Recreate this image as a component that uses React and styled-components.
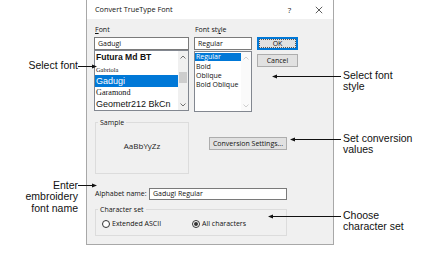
import React from 'react';
import styled, { createGlobalStyle } from 'styled-components';

const Global = createGlobalStyle`
  html, body { margin: 0; padding: 0; background: #fff; }
  #root { width: 432px; height: 262px; }
  * { box-sizing: border-box; }
`;

const Page = styled.div`
  position: relative;
  width: 432px;
  height: 262px;
  overflow: hidden;
  background: #fff;
  font-family: "Open Sans", "Noto Sans", sans-serif;
  color: #000;
`;

const Dialog = styled.div`
  margin-left: 86px;
  width: 248px;
  height: 245px;
  border: 1px solid #a8a8a8;
  border-top: none;
  background: #f0f0f0;
  display: flex;
  flex-direction: column;
`;

const TitleBar = styled.div`
  height: 19px;
  background: #fff;
  display: flex;
  align-items: center;
  padding-left: 8px;
  flex-shrink: 0;
`;

const TitleText = styled.div`
  flex: 1;
  font-size: 7.3px;
  line-height: 19px;
  color: #111;
`;

const TitleControl = styled.div`
  width: 29px;
  height: 19px;
  display: flex;
  align-items: center;
  justify-content: center;
  font-size: 8px;
  color: #222;
`;

const Body = styled.div`
  flex: 1;
  padding: 6px 0 0 7px;
  display: flex;
  flex-direction: column;
`;

const TopGrid = styled.div`
  display: grid;
  grid-template-columns: 95px 58px 41px;
  grid-template-rows: 12px 13px 61px;
  column-gap: 5px;
`;

const FieldLabel = styled.div`
  font-size: 7px;
  line-height: 9px;
  color: #111;
  padding-left: 1px;
  u { text-decoration: underline; text-underline-offset: 1px; }
`;

const TextBox = styled.div`
  height: ${p => p.$h || 13}px;
  width: ${p => (p.$w ? `${p.$w}px` : 'auto')};
  background: #fff;
  border: 1px solid #7a7a7a;
  font-size: 7px;
  line-height: ${p => (p.$h || 13) - 2}px;
  padding-left: 3px;
  color: #111;
  white-space: nowrap;
  overflow: hidden;
`;

const ListBox = styled.div`
  height: 61px;
  margin-top: ${p => p.$mt || 0}px;
  background: #fff;
  border: 1px solid #828790;
  display: flex;
  overflow: hidden;
`;

const Items = styled.div`
  flex: 1;
  min-width: 0;
  overflow: hidden;
  display: flex;
  flex-direction: column;
  padding-top: ${p => p.$pt || 0}px;
`;

const FontItem = styled.div`
  height: ${p => p.$h}px;
  line-height: ${p => p.$h}px;
  padding-left: 1px;
  font-family: ${p => p.$family};
  font-size: ${p => p.$size}px;
  font-weight: ${p => p.$weight || 400};
  white-space: nowrap;
  overflow: hidden;
  background: ${p => (p.$selected ? '#0078d7' : 'transparent')};
  color: ${p => (p.$selected ? '#fff' : '#111')};
`;

const StyleItem = styled.div`
  height: ${p => (p.$selected ? 8 : 9)}px;
  line-height: ${p => (p.$selected ? 8 : 9)}px;
  margin-bottom: ${p => (p.$selected ? 1 : 0)}px;
  font-size: 7px;
  padding-left: 1px;
  white-space: nowrap;
  background: ${p => (p.$selected ? '#0078d7' : 'transparent')};
  color: ${p => (p.$selected ? '#fff' : '#111')};
`;

const ScrollBar = styled.div`
  width: 10px;
  flex-shrink: 0;
  display: flex;
  flex-direction: column;
  align-items: center;
  background: ${p => (p.$disabled ? '#fafafa' : '#f0f0f0')};
`;

const ScrollArrow = styled.div`
  height: 11px;
  width: 10px;
  display: flex;
  align-items: center;
  justify-content: center;
`;

const ScrollTrack = styled.div`
  flex: 1;
  width: 10px;
  display: flex;
  justify-content: center;
`;

const Thumb = styled.div`
  margin-top: 10px;
  width: 8px;
  height: 11px;
  background: #cdcdcd;
`;

const ButtonColumn = styled.div`
  grid-column: 3;
  grid-row: 2 / span 2;
  display: flex;
  flex-direction: column;
  gap: 4px;
`;

const Button = styled.div`
  height: 13px;
  width: ${p => p.$w || 41}px;
  background: #e1e1e1;
  border: 1px solid ${p => (p.$default ? '#0078d7' : '#adadad')};
  box-shadow: ${p => (p.$default ? 'inset 0 0 0 1px #0078d7' : 'none')};
  display: flex;
  align-items: center;
  justify-content: center;
  font-size: 7px;
  line-height: 9px;
  color: #111;
  position: relative;
  white-space: nowrap;
`;

const FocusRect = styled.span`
  position: absolute;
  inset: 1px;
  border: 1px dotted #555;
`;

const SampleRow = styled.div`
  display: flex;
  margin-top: 7px;
  padding-left: 1px;
`;

const Group = styled.fieldset`
  margin: 0;
  padding: 0;
  min-width: 0;
  width: ${p => p.$w}px;
  height: ${p => p.$h}px;
  border: 1px solid #dcdcdc;
  display: block;
`;

const Legend = styled.legend`
  font-size: 7px;
  line-height: 9px;
  padding: 0 2px;
  margin-left: 2px;
  color: #111;
`;

const SampleText = styled.div`
  height: 37px;
  display: flex;
  align-items: center;
  justify-content: center;
  font-family: "Open Sans", sans-serif;
  font-size: 8px;
  color: #222;
`;

const SettingsButton = styled(Button)`
  margin-left: 20px;
  margin-top: 18.5px;
`;

const AlphabetRow = styled.div`
  display: flex;
  align-items: center;
  margin-top: 13.5px;
  padding-left: 1px;
`;

const AlphaLabel = styled.div`
  width: 54px;
  font-size: 7px;
  line-height: 9px;
  color: #111;
`;

const CharsetGroup = styled(Group)`
  margin-top: 5.5px;
  margin-left: 1px;
`;

const RadioRow = styled.div`
  display: grid;
  grid-template-columns: 90px auto;
  padding: 5px 0 0 6px;
`;

const RadioLabel = styled.div`
  display: flex;
  align-items: center;
  gap: 2px;
  font-size: 7px;
  line-height: 9px;
  color: #111;
`;

const RadioCircle = styled.span`
  width: 8px;
  height: 8px;
  border-radius: 50%;
  border: 1px solid #333;
  background: #fff;
  display: flex;
  align-items: center;
  justify-content: center;
  &::after {
    content: '';
    width: 4px;
    height: 4px;
    border-radius: 50%;
    background: ${p => (p.$checked ? '#333' : 'transparent')};
  }
`;

const ArrowLayer = styled.svg`
  position: absolute;
  left: 0;
  top: 0;
  width: 432px;
  height: 262px;
  pointer-events: none;
`;

const Note = styled.div`
  position: absolute;
  top: ${p => p.$top}px;
  ${p => (p.$side === 'left' ? `right: ${432 - p.$x}px; text-align: right;` : `left: ${p.$x}px; text-align: left;`)}
  font-family: "Liberation Sans", Arial, sans-serif;
  font-size: 10.5px;
  line-height: 11.5px;
  color: #111;
  white-space: nowrap;
`;

const Chevron = ({ up, color }) => (
  <svg width="6" height="4" viewBox="0 0 6 4">
    <polyline
      points={up ? '0.5,3.5 3,1 5.5,3.5' : '0.5,0.5 3,3 5.5,0.5'}
      fill="none"
      stroke={color}
      strokeWidth="0.9"
    />
  </svg>
);

const CloseIcon = () => (
  <svg width="8" height="8" viewBox="0 0 8 8">
    <path d="M0.8 0.8 L7.2 7.2 M7.2 0.8 L0.8 7.2" stroke="#333" strokeWidth="0.8" fill="none" />
  </svg>
);

const arrows = [
  { x1: 78, x2: 97, y: 66.5 },
  { x1: 78, x2: 97, y: 185.5 },
  { x1: 341, x2: 272, y: 76.5 },
  { x1: 341, x2: 290, y: 139.5 },
  { x1: 341, x2: 268, y: 216.5 },
];

const fonts = [
  { name: 'Futura Md BT', family: '"Liberation Sans", sans-serif', size: 8.6, weight: 700, h: 13 },
  { name: 'Gabriola', family: '"Liberation Serif", serif', size: 6.4, h: 12 },
  { name: 'Gadugi', family: '"Liberation Sans", sans-serif', size: 9, h: 12, selected: true },
  { name: 'Garamond', family: '"Liberation Serif", serif', size: 8.2, h: 12 },
  { name: 'Geometr212 BkCn', family: '"Liberation Sans", sans-serif', size: 9, h: 12 },
];

const styles = ['Regular', 'Bold', 'Oblique', 'Bold Oblique'];

export default function App() {
  return (
    <Page>
      <Global />
      <Dialog>
        <TitleBar>
          <TitleText>Convert TrueType Font</TitleText>
          <TitleControl>?</TitleControl>
          <TitleControl><CloseIcon /></TitleControl>
        </TitleBar>
        <Body>
          <TopGrid>
            <FieldLabel><u>F</u>ont</FieldLabel>
            <FieldLabel>Font st<u>y</u>le</FieldLabel>
            <div />
            <TextBox>Gadugi</TextBox>
            <TextBox>Regular</TextBox>
            <ButtonColumn>
              <Button $default>OK<FocusRect /></Button>
              <Button>Cancel</Button>
            </ButtonColumn>
            <ListBox>
              <Items>
                {fonts.map(f => (
                  <FontItem
                    key={f.name}
                    $family={f.family}
                    $size={f.size}
                    $weight={f.weight}
                    $h={f.h}
                    $selected={f.selected}
                  >
                    {f.name}
                  </FontItem>
                ))}
              </Items>
              <ScrollBar>
                <ScrollArrow><Chevron up color="#606060" /></ScrollArrow>
                <ScrollTrack><Thumb /></ScrollTrack>
                <ScrollArrow><Chevron color="#606060" /></ScrollArrow>
              </ScrollBar>
            </ListBox>
            <ListBox $mt={1}>
              <Items $pt={1}>
                {styles.map((s, i) => (
                  <StyleItem key={s} $selected={i === 0}>{s}</StyleItem>
                ))}
              </Items>
              <ScrollBar $disabled>
                <ScrollArrow><Chevron up color="#c8c8c8" /></ScrollArrow>
                <ScrollTrack />
                <ScrollArrow><Chevron color="#c8c8c8" /></ScrollArrow>
              </ScrollBar>
            </ListBox>
          </TopGrid>

          <SampleRow>
            <Group $w={94} $h={56}>
              <Legend>Sample</Legend>
              <SampleText>AaBbYyZz</SampleText>
            </Group>
            <SettingsButton $w={78}>Conversion Settings...</SettingsButton>
          </SampleRow>

          <AlphabetRow>
            <AlphaLabel>Alphabet name:</AlphaLabel>
            <TextBox $w={138} $h={12}>Gadugi Regular</TextBox>
          </AlphabetRow>

          <CharsetGroup $w={192} $h={31}>
            <Legend>Character set</Legend>
            <RadioRow>
              <RadioLabel><RadioCircle />Extended ASCII</RadioLabel>
              <RadioLabel><RadioCircle $checked />All characters</RadioLabel>
            </RadioRow>
          </CharsetGroup>
        </Body>
      </Dialog>

      <ArrowLayer viewBox="0 0 432 262">
        {arrows.map((a, i) => {
          const dir = a.x2 > a.x1 ? 1 : -1;
          return (
            <g key={i}>
              <line x1={a.x1} y1={a.y} x2={a.x2 - dir * 3} y2={a.y} stroke="#111" strokeWidth="1" />
              <polygon
                points={`${a.x2},${a.y} ${a.x2 - dir * 5},${a.y - 2} ${a.x2 - dir * 5},${a.y + 2}`}
                fill="#111"
              />
            </g>
          );
        })}
      </ArrowLayer>

      <Note $side="left" $x={78} $top={60}>Select font</Note>
      <Note $side="left" $x={78} $top={179.5}>Enter<br />embroidery<br />font name</Note>
      <Note $side="right" $x={343} $top={69.5}>Select font<br />style</Note>
      <Note $side="right" $x={343} $top={132.5}>Set conversion<br />values</Note>
      <Note $side="right" $x={343} $top={209.5}>Choose<br />character set</Note>
    </Page>
  );
}
